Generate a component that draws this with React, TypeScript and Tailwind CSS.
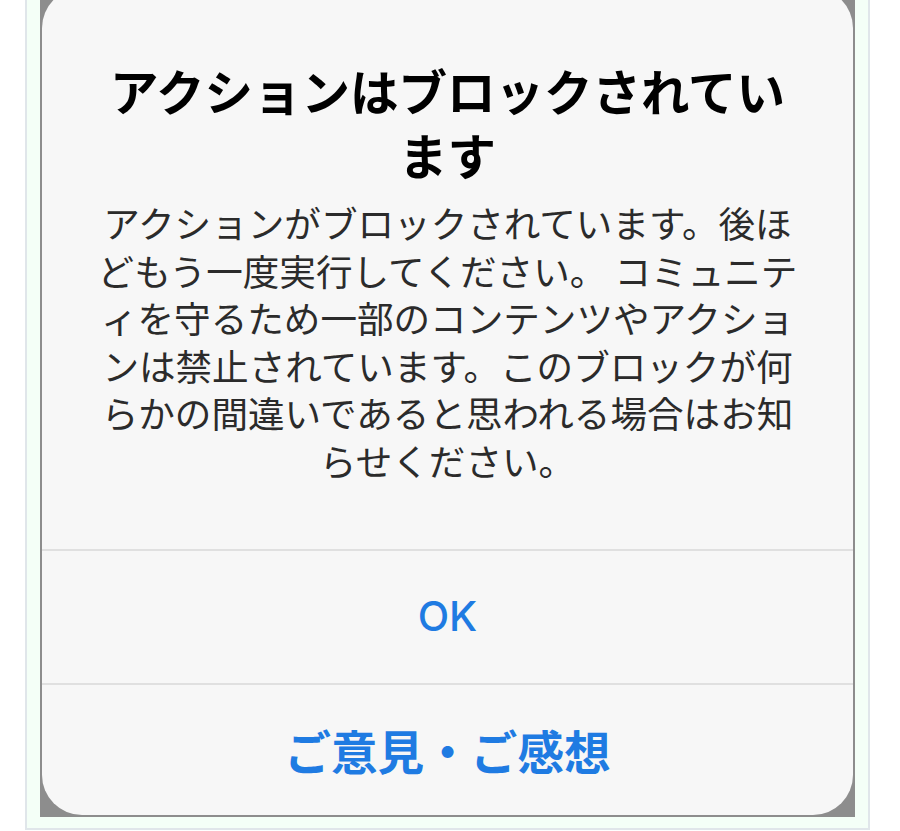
const JP = "font-['Noto_Sans_CJK_JP','Noto_Sans',sans-serif]";

const bodyLines = [
  "アクションがブロックされています。後ほ",
  "どもう一度実行してください。 コミュニテ",
  "ィを守るため一部のコンテンツやアクショ",
  "ンは禁止されています。このブロックが何",
  "らかの間違いであると思われる場合はお知",
  "らせください。",
];

export default function App() {
  return (
    <div className="min-h-[831px] bg-white pl-[25px]">
      <div className="w-[845px] border-x-2 border-b-2 border-[#e0e6ea] bg-[#f4fff7] px-[13px] pb-[11px]">
        <div className="overflow-hidden bg-[#8d8d8d] px-[2px] pb-[2px]">
          <div className={`-mt-[12px] flex flex-col overflow-hidden rounded-[40px] bg-[#f7f7f7] ${JP}`}>
            <div className="flex h-[561px] flex-col items-center pt-[70px]">
              <h1 className="text-center text-[48.5px] font-bold leading-[64px] text-black">
                アクションはブロックされてい
                <br />
                ます
              </h1>
              <p className="mt-[13px] text-center text-[36.6px] leading-[47.6px] text-[#2b2b2b]">
                {bodyLines.map((line) => (
                  <span key={line} className="block whitespace-pre">
                    {line}
                  </span>
                ))}
              </p>
            </div>
            <div className="h-[2px] bg-[#e0e0e0]" />
            <button className="flex h-[132px] items-center justify-center font-['Inter',sans-serif] text-[41px] font-[450] text-[#1f7be2]">
              OK
            </button>
            <div className="h-[2px] bg-[#e0e0e0]" />
            <button className="flex h-[130px] items-center justify-center text-[46.6px] font-bold text-[#1f7be2]">
              ご意見・ご感想
            </button>
          </div>
        </div>
      </div>
    </div>
  );
}
